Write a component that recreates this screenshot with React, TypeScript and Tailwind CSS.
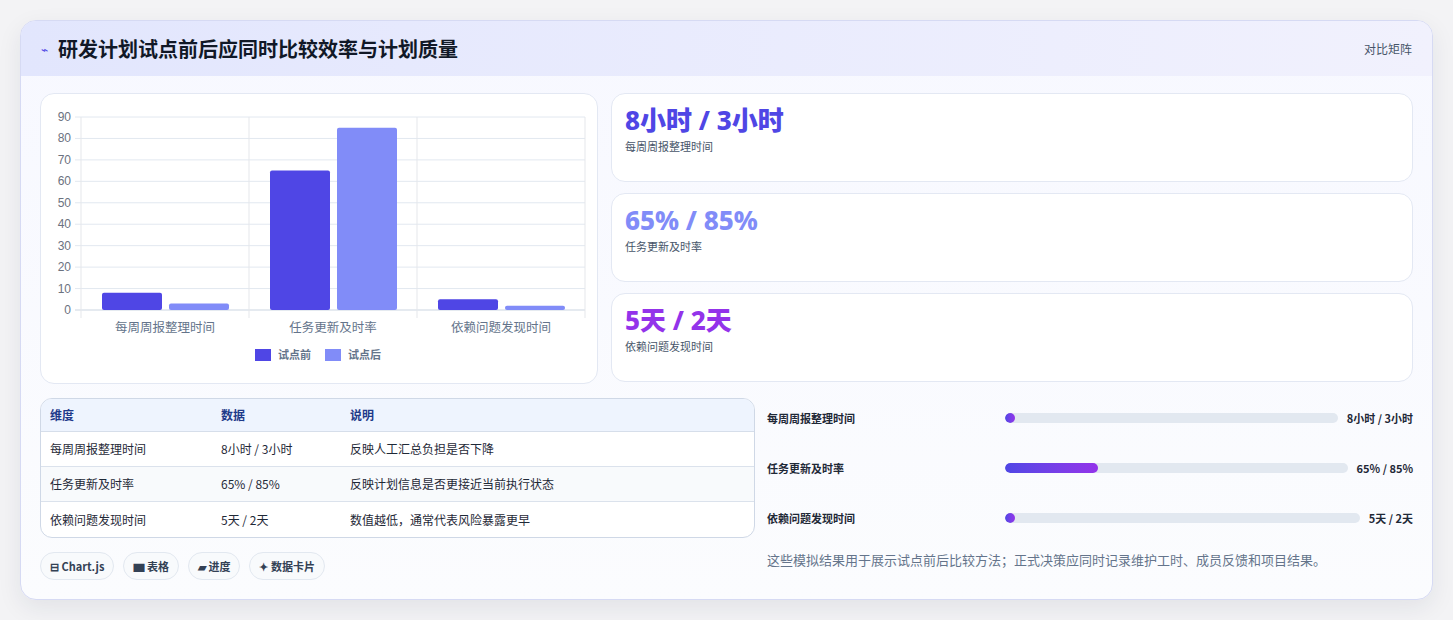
import React from "react";

const F = { fontFamily: '"Noto Sans CJK SC","Noto Sans",sans-serif' };

function Chart() {
  const x0 = 40, x1 = 544, yTop = 23, y0 = 216;
  const h = y0 - yTop;
  const ticks = [0,10,20,30,40,50,60,70,80,90];
  const groups = [
    { label: "每周周报整理时间", a: 8, b: 3 },
    { label: "任务更新及时率", a: 65, b: 85 },
    { label: "依赖问题发现时间", a: 5, b: 2 },
  ];
  const gw = (x1 - x0) / 3;
  const yv = (v: number) => y0 - (v / 90) * h;
  return (
    <svg width="556" height="288" className="block" style={F}>
      {ticks.map((t) => (
        <g key={t}>
          <line x1={x0 - 6} x2={x1} y1={yv(t)} y2={yv(t)} stroke={t === 0 ? "#cbd5e1" : "#e2e8f0"} />
          <text x={x0 - 10} y={yv(t) + 4} textAnchor="end" fontSize="12" fill="#6b7280" fontFamily="Liberation Sans, sans-serif">{t}</text>
        </g>
      ))}
      {[0,1,2,3].map((i) => (
        <line key={i} x1={x0 + gw * i} x2={x0 + gw * i} y1={yTop} y2={y0 + 8} stroke="#e5e7eb" />
      ))}
      {groups.map((g, i) => {
        const gx = x0 + gw * i;
        return (
          <g key={i}>
            <rect x={gx + 21} y={yv(g.a)} width={60} height={y0 - yv(g.a)} rx={2} fill="#4f46e5" />
            <rect x={gx + 88} y={yv(g.b)} width={60} height={y0 - yv(g.b)} rx={2} fill="#818cf8" />
            <text x={gx + gw / 2} y={238} textAnchor="middle" fontSize="12.5" fill="#64748b">{g.label}</text>
          </g>
        );
      })}
      <rect x={214} y={255} width={16} height={12} fill="#4f46e5" />
      <text x={237} y={265} fontSize="11" fill="#64748b" fontWeight="600">试点前</text>
      <rect x={284} y={255} width={16} height={12} fill="#818cf8" />
      <text x={307} y={265} fontSize="11" fill="#64748b" fontWeight="600">试点后</text>
    </svg>
  );
}

const metrics = [
  { v: "8小时 / 3小时", l: "每周周报整理时间", c: "text-[#4f46e5]" },
  { v: "65% / 85%", l: "任务更新及时率", c: "text-[#818cf8]" },
  { v: "5天 / 2天", l: "依赖问题发现时间", c: "text-[#9333ea]" },
];

const rows = [
  ["每周周报整理时间", "8小时 / 3小时", "反映人工汇总负担是否下降"],
  ["任务更新及时率", "65% / 85%", "反映计划信息是否更接近当前执行状态"],
  ["依赖问题发现时间", "5天 / 2天", "数值越低，通常代表风险暴露更早"],
];

const bars = [
  { l: "每周周报整理时间", v: "8小时 / 3小时", p: 2 },
  { l: "任务更新及时率", v: "65% / 85%", p: 27 },
  { l: "依赖问题发现时间", v: "5天 / 2天", p: 2 },
];

export default function App() {
  return (
    <div className="w-[1453px] h-[620px] bg-[#f3f3f5] pt-[20px] pl-[20px]" style={F}>
      <div className="w-[1413px] h-[580px] rounded-[16px] border border-[#d6daf3] bg-gradient-to-b from-[#f7f8ff] to-[#fbfcfe] overflow-hidden shadow-[0_8px_24px_rgba(30,41,59,0.08)]">
        <div className="h-[55px] flex items-center justify-between px-[20px] bg-gradient-to-r from-[#e2e6fd] to-[#f1f1fd]">
          <div className="flex items-center gap-[10px]">
            <span className="text-[#4f46e5] text-[12px]">⌁</span>
            <span className="text-[20px] font-bold text-[#111827]">研发计划试点前后应同时比较效率与计划质量</span>
          </div>
          <span className="text-[12px] text-[#475569]">对比矩阵</span>
        </div>
        <div className="px-[19px] pt-[17px]">
          <div className="flex gap-[13px]">
            <div className="w-[558px] h-[291px] bg-white rounded-[14px] border border-[#e3e8f3]">
              <Chart />
            </div>
            <div className="flex-1 flex flex-col gap-[11px]">
              {metrics.map((m) => (
                <div key={m.l} className="h-[89px] bg-white rounded-[14px] border border-[#e3e8f3] px-[13px] pt-[10px]">
                  <div className={`text-[26px] font-extrabold leading-[32px] ${m.c}`} style={{ fontFamily: '"Noto Sans","Noto Sans CJK SC",sans-serif' }}>{m.v}</div>
                  <div className="text-[11px] text-[#475569] mt-[2px]">{m.l}</div>
                </div>
              ))}
            </div>
          </div>
          <div className="flex gap-[12px] mt-[14px]">
            <div className="w-[715px]">
              <div className="rounded-[12px] border border-[#cfd8e6] overflow-hidden bg-white">
                <div className="flex h-[33px] items-center bg-[#eef4fe] text-[12px] font-semibold text-[#1e3a8a] border-b border-[#d6deea]">
                  <div className="w-[180px] pl-[9px]">维度</div>
                  <div className="w-[129px]">数据</div>
                  <div>说明</div>
                </div>
                {rows.map((r, i) => (
                  <div key={i} className={`flex h-[35px] items-center text-[12px] text-[#1f2937] ${i < 2 ? "border-b border-[#dbe2ec]" : ""} ${i === 1 ? "bg-[#f8fafc]" : ""}`}>
                    <div className="w-[180px] pl-[9px]">{r[0]}</div>
                    <div className="w-[129px]">{r[1]}</div>
                    <div>{r[2]}</div>
                  </div>
                ))}
              </div>
              <div className="flex gap-[9px] mt-[14px]">
                {["⊟ Chart.js", "▆ 表格", "▰ 进度", "✦ 数据卡片"].map((t) => (
                  <span key={t} className="h-[28px] px-[9px] flex items-center rounded-full border border-[#e2e8f0] bg-[#f8fafc] text-[11px] font-semibold text-[#334155]">{t}</span>
                ))}
              </div>
            </div>
            <div className="flex-1">
              <div className="flex flex-col gap-[30px] pt-[10px]">
                {bars.map((b) => (
                  <div key={b.l} className="flex items-center h-[20px] text-[11px] font-semibold text-[#1f2937]">
                    <div className="w-[238px]">{b.l}</div>
                    <div className="flex-1 h-[10px] rounded-full bg-[#e2e8f0] overflow-hidden">
                      <div className="h-full rounded-full bg-gradient-to-r from-[#4f46e5] to-[#9333ea]" style={{ width: `${b.p}%`, minWidth: 10 }} />
                    </div>
                    <div className="ml-[9px] whitespace-nowrap">{b.v}</div>
                  </div>
                ))}
              </div>
              <p className="mt-[22px] text-[13px] text-[#64748b]">这些模拟结果用于展示试点前后比较方法；正式决策应同时记录维护工时、成员反馈和项目结果。</p>
            </div>
          </div>
        </div>
      </div>
    </div>
  );
}
